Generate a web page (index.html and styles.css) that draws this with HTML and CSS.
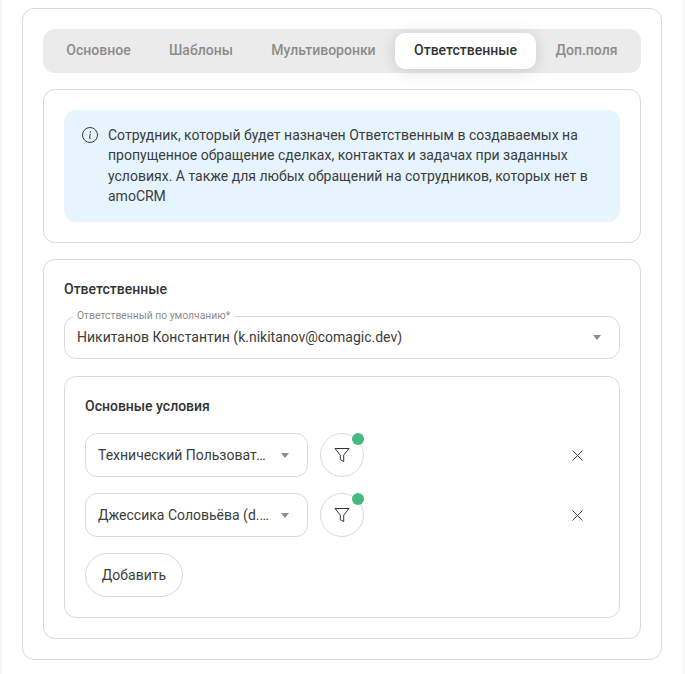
FILE: index.html
```html
<!DOCTYPE html>
<html lang="ru">
<head>
<meta charset="utf-8">
<title>Ответственные</title>
<link rel="stylesheet" href="styles.css">
</head>
<body>
<main class="page">
  <div class="panel">
    <nav class="tabs">
      <button class="tab tab-a">Основное</button>
      <button class="tab tab-b">Шаблоны</button>
      <button class="tab tab-c">Мультиворонки</button>
      <button class="tab tab-d active">Ответственные</button>
      <button class="tab tab-e">Доп.поля</button>
    </nav>
    <section class="card">
      <div class="info">
        <svg class="info-icon" width="16" height="16" viewBox="0 0 16 16" fill="none" stroke="#3a3a3a" stroke-width="1">
          <circle cx="8" cy="8" r="7.5"/>
          <path d="M8.3 4.6v.9M8.2 7.2 7.6 11c-.1.5.3.6.9.3" stroke-linecap="round"/>
        </svg>
        <p class="info-text">Сотрудник, который будет назначен Ответственным в создаваемых на пропущенное обращение сделках, контактах и задачах при заданных условиях. А также для любых обращений на сотрудников, которых нет в amoCRM</p>
      </div>
    </section>
    <section class="card card-main">
      <h2 class="title">Ответственные</h2>
      <div class="field">
        <span class="field-label">Ответственный по умолчанию*</span>
        <span class="field-value">Никитанов Константин (k.nikitanov@comagic.dev)</span>
        <span class="caret"></span>
      </div>
      <div class="conditions">
        <h3 class="title">Основные условия</h3>
        <div class="row">
          <div class="select"><span class="select-value">Технический Пользователь</span><span class="caret"></span></div>
          <button class="filter">
            <svg width="16" height="16" viewBox="0 0 16 16" fill="none" stroke="#333" stroke-width="1" stroke-linejoin="round"><path d="M1 1.5h14L9.7 8.2v6.4L6.3 12.6V8.2z"/></svg>
            <span class="dot"></span>
          </button>
          <button class="remove"><svg width="11" height="11" viewBox="0 0 11 11" stroke="#444" stroke-width="1"><path d="M.5.5l10 10M10.5.5l-10 10"/></svg></button>
        </div>
        <div class="row">
          <div class="select"><span class="select-value">Джессика Соловьёва (d.soloveva@comagic.dev)</span><span class="caret"></span></div>
          <button class="filter">
            <svg width="16" height="16" viewBox="0 0 16 16" fill="none" stroke="#333" stroke-width="1" stroke-linejoin="round"><path d="M1 1.5h14L9.7 8.2v6.4L6.3 12.6V8.2z"/></svg>
            <span class="dot"></span>
          </button>
          <button class="remove"><svg width="11" height="11" viewBox="0 0 11 11" stroke="#444" stroke-width="1"><path d="M.5.5l10 10M10.5.5l-10 10"/></svg></button>
        </div>
        <button class="add">Добавить</button>
      </div>
    </section>
  </div>
</main>
</body>
</html>
```
FILE: styles.css
```css
* { box-sizing: border-box; }
html, body { margin: 0; height: 100%; background: #f7f7f7; overflow: hidden; }
body { font-family: Roboto, "Liberation Sans", sans-serif; color: #333; }
.page { margin: 0 3px 0 2px; height: 100%; background: #fff; padding: 8px 0 0 20px; }
.panel { width: 640px; height: 652px; border: 1px solid #d9d9d9; border-radius: 12px; padding: 20px; display: flex; flex-direction: column; gap: 16px; background: #fff; }
.tabs { height: 44px; background: #ebebeb; border-radius: 12px; padding: 4px; display: flex; align-items: stretch; }
.tab { border: 0; background: none; font: 500 14px/20px Roboto, sans-serif; color: #8c8c8c; padding: 0 0 2px; border-radius: 10px; text-align: center; }
.tab-a { width: 103px; }
.tab-b { width: 102px; }
.tab-c { width: 143px; }
.tab-d { width: 141px; }
.tab-e { width: 101px; }
.tab.active { background: #fff; color: #333; box-shadow: 0 2px 16px rgba(0,0,0,.14); position: relative; }
.card { border: 1px solid #d9d9d9; border-radius: 12px; padding: 20px; }
.info { background: #e6f4fd; border-radius: 12px; min-height: 112px; padding: 15px 20px 15px 18px; display: flex; gap: 10px; }
.info-icon { flex: none; margin-top: 2px; }
.info-text { margin: 0; font-size: 14px; line-height: 20.3px; color: #3c3c3c; }
.card-main { padding-top: 19px; flex: 1; }
.title { margin: 0; font-size: 14px; line-height: 20px; font-weight: 500; color: #333; }
.field { position: relative; height: 43px; margin-top: 17px; border: 1px solid #d9d9d9; border-radius: 12px; padding: 0 12px; display: flex; align-items: center; justify-content: space-between; }
.field-label { position: absolute; top: -8px; left: 8px; padding: 0 4px; background: #fff; font-size: 10.35px; line-height: 14px; color: #8c8c8c; }
.field-value { font-size: 14px; color: #3c3c3c; margin-bottom: 2px; }
.caret { flex: none; width: 0; height: 0; border-left: 4.5px solid transparent; border-right: 4.5px solid transparent; border-top: 5px solid #8c8c8c; margin-right: 6px; }
.conditions { margin-top: 17px; height: 242px; border: 1px solid #d9d9d9; border-radius: 12px; padding: 19px 20px 20px; }
.row { display: flex; align-items: center; height: 44px; margin-top: 17px; }
.row + .row { margin-top: 16px; }
.select { width: 223px; height: 44px; border: 1px solid #d9d9d9; border-radius: 12px; padding: 0 12px; display: flex; align-items: center; justify-content: space-between; gap: 12px; }
.select-value { font-size: 14px; color: #3c3c3c; white-space: nowrap; overflow: hidden; text-overflow: ellipsis; }
.filter { position: relative; width: 44px; height: 44px; margin-left: 12px; border: 1px solid #d9d9d9; border-radius: 50%; background: #fff; padding: 0; display: flex; align-items: center; justify-content: center; }
.dot { position: absolute; top: -1px; right: -1px; width: 12px; height: 12px; border-radius: 50%; background: #47b881; }
.remove { margin-left: auto; margin-right: 16px; width: 11px; height: 11px; padding: 0; border: 0; background: none; display: flex; }
.add { display: block; margin-top: 16px; width: 98px; height: 44px; border: 1px solid #d9d9d9; border-radius: 22px; background: #fff; font: 400 14px Roboto, sans-serif; color: #3c3c3c; padding: 0; }
```
